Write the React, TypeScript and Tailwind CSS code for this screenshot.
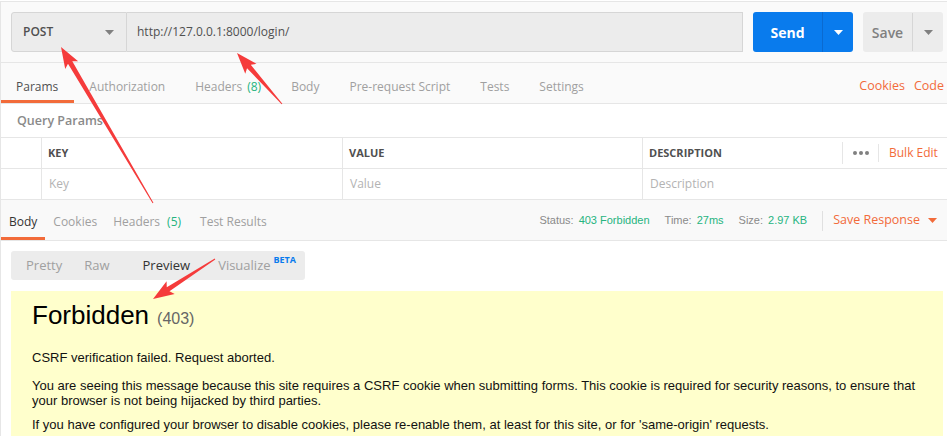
import React from 'react';

const Caret = ({ className }: { className: string }) => (
  <svg width="9" height="5" viewBox="0 0 9 5" className={className}>
    <path d="M0 0h9L4.5 5z" fill="currentColor" />
  </svg>
);

type Pt = [number, number];

// tapered annotation arrow, thin at the tail and wide at the head
const Arrow = ({ from, to }: { from: Pt; to: Pt }) => {
  const dx = to[0] - from[0];
  const dy = to[1] - from[1];
  const len = Math.hypot(dx, dy);
  const ux = dx / len;
  const uy = dy / len;
  const nx = -uy;
  const ny = ux;
  const headLen = 21;
  const bx = to[0] - ux * headLen;
  const by = to[1] - uy * headLen;
  const pts: Pt[] = [
    [from[0] + nx * 0.5, from[1] + ny * 0.5],
    [bx + ux * 3 + nx * 2.5, by + uy * 3 + ny * 2.5],
    [bx + nx * 7.5, by + ny * 7.5],
    to,
    [bx - nx * 7.5, by - ny * 7.5],
    [bx + ux * 3 - nx * 2.5, by + uy * 3 - ny * 2.5],
    [from[0] - nx * 0.5, from[1] - ny * 0.5],
  ];
  return <polygon points={pts.map((p) => p.join(',')).join(' ')} fill="#f53b3b" />;
};

const requestTabs = [
  { label: 'Params', active: true },
  { label: 'Authorization' },
  { label: 'Headers', count: '(8)' },
  { label: 'Body' },
  { label: 'Pre-request Script' },
  { label: 'Tests' },
  { label: 'Settings' },
];

const responseTabs = [
  { label: 'Body', active: true },
  { label: 'Cookies' },
  { label: 'Headers', count: '(5)' },
  { label: 'Test Results' },
];

export default function App() {
  return (
    <div className="relative w-[947px] h-[436px] overflow-hidden bg-white font-['Open_Sans',sans-serif]">
      <div className="mt-px h-[435px] border-t border-l border-[#e6e6e6] flex flex-col">
        {/* request bar */}
        <div className="h-[61px] shrink-0 bg-[#fafafa] border-b border-[#e6e6e6] flex items-start pt-[10px] pl-[10px]">
          <div className="flex h-10 w-[116px] items-center justify-between border border-[#d6d6d6] rounded-l-[3px] bg-[#ececec] pl-[11px] pr-[12px] text-[12px] font-semibold text-[#505050]">
            <span>POST</span>
            <Caret className="text-[#808080]" />
          </div>
          <div className="flex h-10 w-[616px] items-center border border-l-0 border-[#d6d6d6] bg-[#ececec] pl-[10px] text-[12px] text-[#505050]">
            http://127.0.0.1:8000/login/
          </div>
          <div className="ml-[10px] flex h-10 w-[100px] rounded-[3px] bg-[#097bed] text-white">
            <div className="flex w-[69px] items-center justify-center text-[14px] font-bold">Send</div>
            <div className="flex flex-1 items-center justify-center border-l border-[#0a6ad0]">
              <Caret className="text-white" />
            </div>
          </div>
          <div className="ml-[10px] flex h-10 w-[80px] rounded-[3px] bg-[#ececec] text-[#808080]">
            <div className="flex w-[49px] items-center justify-center text-[14px] font-semibold">Save</div>
            <div className="my-[1px] flex flex-1 items-center justify-center border-l border-[#d6d6d6]">
              <Caret className="text-[#808080]" />
            </div>
          </div>
        </div>

        {/* request tabs */}
        <div className="h-[41px] shrink-0 bg-[#fafafa] border-b border-[#e6e6e6] flex items-end text-[12px]">
          {requestTabs.map((t, i) => (
            <div
              key={t.label}
              className={`relative flex h-full items-end pb-[7px] ${i === 0 ? 'pl-[15px] pr-[16px]' : 'px-[15px]'} ${t.active ? 'text-[#505050]' : 'text-[#a0a0a0]'}`}
            >
              <span>
                {t.label}
                {t.count && <span className="ml-[5px] text-[#26b47f]">{t.count}</span>}
              </span>
              {t.active && <span className="absolute left-0 right-0 bottom-0 h-[3px] bg-[#f26b3a]" />}
            </div>
          ))}
          <div className="ml-auto flex gap-[9px] pr-[3px] pb-[7px] text-[12.5px] text-[#f26b3a]">
            <span>Cookies</span>
            <span>Code</span>
          </div>
        </div>

        {/* query params */}
        <div className="h-[33px] shrink-0 flex items-center pt-[2px] pl-[16px] text-[12.5px] font-semibold text-[#8a8a8a]">
          Query Params
        </div>
        <div className="shrink-0 border-t border-[#e6e6e6]">
          <div className="flex h-[31px] border-b border-[#e6e6e6] text-[11px] font-bold text-[#505050]">
            <div className="w-[40px]" />
            <div className="flex w-[301px] items-center border-l border-[#e6e6e6] pl-[6px]">KEY</div>
            <div className="flex w-[300px] items-center border-l border-[#e6e6e6] pl-[6px]">VALUE</div>
            <div className="flex w-[200px] items-center border-l border-[#e6e6e6] pl-[6px]">DESCRIPTION</div>
            <div className="flex flex-1 items-center">
              <div className="flex h-[22px] w-[36px] items-center justify-center gap-[2px] border-l border-[#e6e6e6]">
                <span className="h-[4px] w-[4px] rounded-full bg-[#808080]" />
                <span className="h-[4px] w-[4px] rounded-full bg-[#808080]" />
                <span className="h-[4px] w-[4px] rounded-full bg-[#808080]" />
              </div>
              <div className="flex h-[18px] items-center border-l border-[#e6e6e6] pl-[10px] text-[12px] font-normal text-[#f26b3a]">
                Bulk Edit
              </div>
            </div>
          </div>
          <div className="flex h-[31px] border-b border-[#e6e6e6] text-[12px] text-[#b3b3b3]">
            <div className="w-[40px]" />
            <div className="flex w-[301px] items-center border-l border-[#e6e6e6] pl-[7px]">Key</div>
            <div className="flex w-[300px] items-center border-l border-[#e6e6e6] pl-[7px]">Value</div>
            <div className="flex w-[200px] items-center border-l border-[#e6e6e6] pl-[7px]">Description</div>
            <div className="flex-1" />
          </div>
        </div>

        {/* response tabs */}
        <div className="h-[41px] shrink-0 bg-[#f9f9f9] border-b border-[#e6e6e6] flex items-end text-[12px]">
          {responseTabs.map((t, i) => (
            <div
              key={t.label}
              className={`relative flex h-full items-end pb-[9px] ${i === 3 ? 'pl-[11px]' : 'px-[8px]'} ${t.active ? 'text-[#333]' : 'text-[#a0a0a0]'}`}
            >
              <span>
                {t.label}
                {t.count && <span className="ml-[7px] text-[#26b47f]">{t.count}</span>}
              </span>
              {t.active && <span className="absolute left-0 right-0 bottom-0 h-[3px] bg-[#f26b3a]" />}
            </div>
          ))}
          <div className="ml-auto flex h-full items-center pr-[10px] pt-[1px]">
            <div className="flex items-center font-['Liberation_Sans',Arial,sans-serif] text-[11px]">
              <span className="text-[#8a8a8a]">Status:</span>
              <span className="ml-[5px] text-[#26b47f]">403 Forbidden</span>
              <span className="ml-[15px] text-[#8a8a8a]">Time:</span>
              <span className="ml-[5px] text-[#26b47f]">27ms</span>
              <span className="ml-[15px] text-[#8a8a8a]">Size:</span>
              <span className="ml-[5px] text-[#26b47f]">2.97 KB</span>
            </div>
            <div className="ml-[15px] h-[20px] border-l border-[#e0e0e0]" />
            <span className="ml-[10px] text-[12.5px] text-[#f26b3a]">Save Response</span>
            <Caret className="ml-[8px] text-[#f26b3a]" />
          </div>
        </div>

        {/* response body */}
        <div className="flex-1 min-h-0 px-[10px] pt-[10px]">
          <div className="flex h-[29px] w-[294px] items-center rounded-[3px] bg-[#ececec] text-[13px] text-[#a0a0a0]">
            <span className="ml-[15px]">Pretty</span>
            <span className="ml-[22px]">Raw</span>
            <span className="ml-[33px] text-[#333]">Preview</span>
            <span className="ml-[28px]">Visualize</span>
            <span className="ml-[3px] -mt-[12px] text-[9px] font-bold text-[#097bed]">BETA</span>
          </div>
          <div className="mt-[11px] h-[200px] w-[932px] bg-[#ffffcc] pl-[21px] pt-[9px] font-['Liberation_Sans',Arial,sans-serif] text-[13px] text-[#111]">
            <div className="flex items-baseline leading-[30px]">
              <span className="text-[26px] text-black">Forbidden</span>
              <span className="ml-[8px] text-[16px] text-[#666]">(403)</span>
            </div>
            <p className="mt-[17px] leading-[14px]">CSRF verification failed. Request aborted.</p>
            <p className="mt-[13px] w-[900px] leading-[15px]">
              You are seeing this message because this site requires a CSRF cookie when submitting forms. This cookie is
              required for security reasons, to ensure that your browser is not being hijacked by third parties.
            </p>
            <p className="mt-[10px] leading-[14px]">
              If you have configured your browser to disable cookies, please re-enable them, at least for this site, or for
              'same-origin' requests.
            </p>
          </div>
        </div>
      </div>

      {/* annotation arrows */}
      <svg className="pointer-events-none absolute inset-0" width="947" height="436">
        <Arrow from={[153, 203]} to={[61, 47]} />
        <Arrow from={[282, 104]} to={[237, 53]} />
        <Arrow from={[215, 259]} to={[153, 299]} />
      </svg>
    </div>
  );
}
